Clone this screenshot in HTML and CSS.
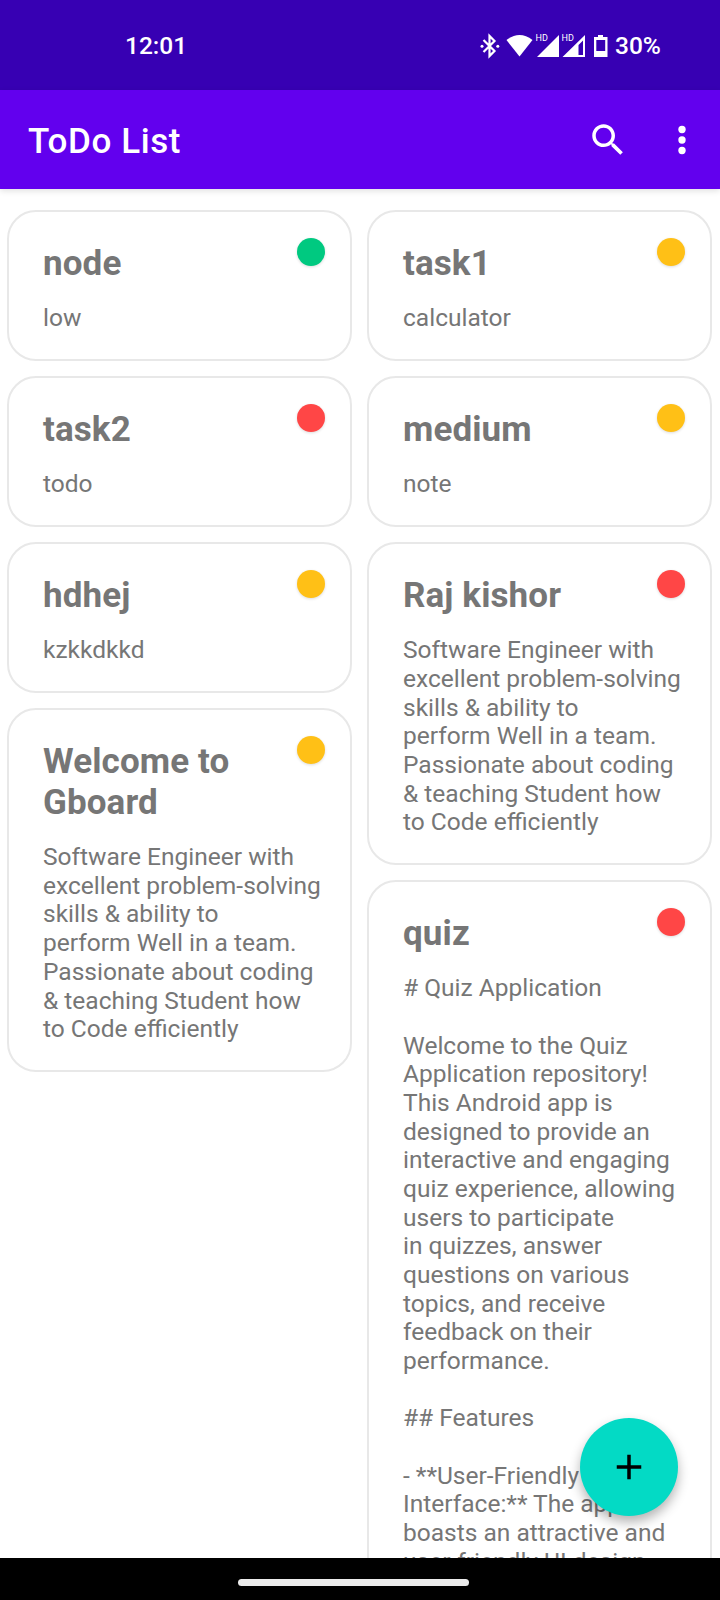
FILE: index.html
```html
<!DOCTYPE html>
<html lang="en">
<head>
<meta charset="utf-8">
<title>ToDo List</title>
<link rel="stylesheet" href="styles.css">
</head>
<body>
<div class="screen">
  <header class="status">
    <span class="clock">12:01</span>
    <svg class="status-icons" width="132" height="30" viewBox="0 0 132 30" fill="#fff">
      <path d="M3.5 9 L14.5 20 L9.5 25 V5 L14.5 10 L3.5 21" fill="none" stroke="#fff" stroke-width="2.2"/>
      <circle cx="2" cy="15.3" r="1.5"/><circle cx="17.8" cy="15.3" r="1.5"/>
      <path d="M26.5 9 Q39.500 -1 52.500 9 L39.500 25.500 Z"/>
      <text class="hd" x="55.500" y="9.500">HD</text>
      <path d="M79 4 V26 H57 Z"/>
      <text class="hd" x="81.500" y="9.500">HD</text>
      <path fill-rule="evenodd" d="M105 4 V26 H82.500 Z M103 9.500 L98.500 14 V24 H103 Z"/>
      <path fill-rule="evenodd" d="M118 4 H123 V6 H127.500 V26 H114 V6 H118 Z M116.300 9 V20 H125.200 V9 Z"/>
    </svg>
    <span class="battery">30%</span>
  </header>
  <nav class="appbar">
    <h1 class="appbar-title">ToDo List</h1>
    <svg class="search" width="42" height="42" viewBox="0 0 24 24" fill="#fff"><path d="M15.500 14h-.79l-.28-.27C15.410 12.590 16 11.110 16 9.500 16 5.910 13.090 3 9.500 3S3 5.910 3 9.500 5.910 16 9.500 16c1.610 0 3.090-.59 4.230-1.570l.27.28v.79l5 4.990L20.490 19l-4.990-5zm-6 0C7.010 14 5 11.990 5 9.500S7.010 5 9.500 5 14 7.010 14 9.500 11.990 14 9.500 14z"/></svg>
    <svg class="more" width="42" height="42" viewBox="0 0 24 24" fill="#fff"><circle cx="12" cy="6" r="2.100"/><circle cx="12" cy="12" r="2.100"/><circle cx="12" cy="18" r="2.100"/></svg>
  </nav>
  <main class="board">
    <div class="column">
      <article class="card"><h2 class="title">node</h2><p class="note">low</p><i class="dot low"></i></article>
      <article class="card"><h2 class="title">task2</h2><p class="note">todo</p><i class="dot high"></i></article>
      <article class="card"><h2 class="title">hdhej</h2><p class="note">kzkkdkkd</p><i class="dot medium"></i></article>
      <article class="card"><h2 class="title">Welcome to
Gboard</h2><p class="note">Software Engineer with
excellent problem-solving
skills &amp; ability to
perform Well in a team.
Passionate about coding
&amp; teaching Student how
to Code efficiently</p><i class="dot medium"></i></article>
    </div>
    <div class="column">
      <article class="card"><h2 class="title">task1</h2><p class="note">calculator</p><i class="dot medium"></i></article>
      <article class="card"><h2 class="title">medium</h2><p class="note">note</p><i class="dot medium"></i></article>
      <article class="card"><h2 class="title">Raj kishor</h2><p class="note">Software Engineer with
excellent problem-solving
skills &amp; ability to
perform Well in a team.
Passionate about coding
&amp; teaching Student how
to Code efficiently</p><i class="dot high"></i></article>
      <article class="card"><h2 class="title">quiz</h2><p class="note"># Quiz Application

Welcome to the Quiz
Application repository!
This Android app is
designed to provide an
interactive and engaging
quiz experience, allowing
users to participate
in quizzes, answer
questions on various
topics, and receive
feedback on their
performance.

## Features

- **User-Friendly
Interface:** The app
boasts an attractive and
user-friendly UI design.</p><i class="dot high"></i></article>
    </div>
    <button class="fab" aria-label="Add task"><svg width="42" height="42" viewBox="0 0 24 24"><path d="M19 13h-6v6h-2v-6H5v-2h6V5h2v6h6z"/></svg></button>
  </main>
  <footer class="navbar"><span class="handle"></span></footer>
</div>
</body>
</html>
```
FILE: styles.css
```css
* { box-sizing: border-box; }
body { margin: 0; font-family: Roboto, "Liberation Sans", sans-serif; background: #fff; }
.screen { width: 720px; height: 1600px; display: flex; flex-direction: column; overflow: hidden; }
.status { flex: none; height: 90px; padding: 0 59px 0 125px; display: flex; align-items: center; background: #3700b3; color: #fff; font-size: 24.5px; font-weight: 500; line-height: 30px; }
.clock { flex: 1; padding-top: 2px; }
.battery { padding-top: 2px; width: 46px; white-space: nowrap; }
.status-icons { margin: 1px 3px 0 0; }
.hd { font-size: 9px; font-weight: 400; }
.appbar { position: relative; z-index: 1; flex: none; height: 98.5px; padding: 0 17px 0 28px; display: flex; align-items: center; background: #6200ee; color: #fff; box-shadow: 0 2px 6px rgba(0,0,0,.12); }
.appbar-title { flex: 1; margin: 0; padding-top: 4px; font-size: 35px; font-weight: 500; line-height: 41px; letter-spacing: 0.6px; }
.search, .more { margin-top: 2px; }
.search { margin-right: 32px; }
.board { position: relative; flex: 1; min-height: 0; overflow: hidden; padding: 21.5px 8px 0 7px; display: grid; grid-template-columns: 1fr 1fr; column-gap: 15px; }
.column { display: flex; flex-direction: column; gap: 15px; }
.card { position: relative; flex: none; padding: 31px 0 26.130px 34px; border: 2px solid #e8e8e8; border-radius: 29px; color: #767676; }
.title { margin: 0 0 20.200px; font-size: 35px; font-weight: 700; line-height: 41px; letter-spacing: 0.1px; white-space: pre; }
.note { margin: 0; font-size: 24.530px; line-height: 28.670px; white-space: pre; }
.dot { position: absolute; top: 26px; right: 25px; width: 28px; height: 28px; border-radius: 50%; box-shadow: 0 1px 3px rgba(0,0,0,.14); }
.low { background: #00c980; }
.medium { background: #ffc016; }
.high { background: #ff4646; }
.fab { position: absolute; right: 42px; bottom: 42px; width: 98px; height: 98px; padding: 0; border: 0; border-radius: 50%; display: grid; place-items: center; background: #03dac5; box-shadow: 0 6px 12px rgba(0,0,0,.3); }
.navbar { flex: none; height: 42px; display: flex; align-items: center; justify-content: center; padding-top: 7px; background: #000; }
.handle { width: 231px; height: 7px; margin-left: -13px; border-radius: 4px; background: #ebebeb; }
```
